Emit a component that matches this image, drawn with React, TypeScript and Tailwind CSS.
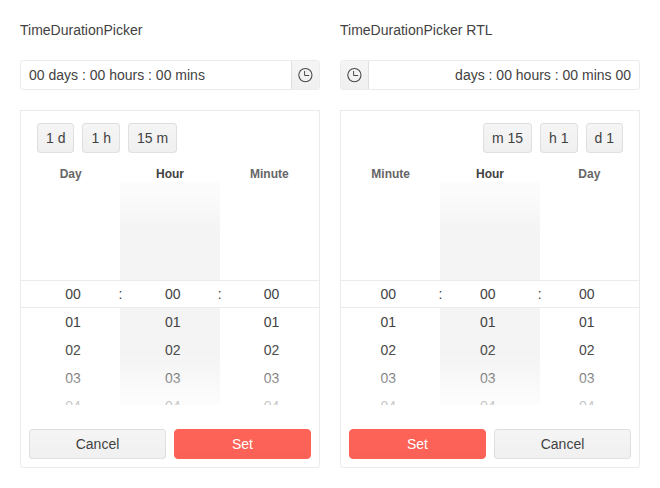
const buttonFace =
  'border border-black/8 bg-[#f5f5f5] bg-linear-to-b from-transparent to-black/[0.02] text-[#424242]';

const columns = [
  { label: 'Day', active: false },
  { label: 'Hour', active: true },
  { label: 'Minute', active: false },
];

const values = ['00', '01', '02', '03', '04'];

function ClockIcon() {
  return (
    <svg width="16" height="16" viewBox="0 0 16 16" fill="none" stroke="#4a4a4a">
      <circle cx="8.4" cy="8.1" r="6.6" strokeWidth="1.1" />
      <path d="M7.6 4v4.5h4.6" strokeWidth="1" />
    </svg>
  );
}

function DateInput({ rtl }: { rtl: boolean }) {
  return (
    <div className="mt-5 flex h-[30px] overflow-hidden rounded border border-black/8 bg-white">
      <span className="flex-1 px-2 py-1">00 days : 00 hours : 00 mins</span>
      <button
        className={`flex w-7 shrink-0 items-center justify-center border-s border-black/8 bg-[#f5f5f5] bg-linear-to-b from-transparent to-black/[0.02] pr-px`}
      >
        <ClockIcon />
      </button>
    </div>
  );
}

function TimeColumn({ label, active, rtl }: { label: string; active: boolean; rtl: boolean }) {
  return (
    <div className="flex min-w-0 flex-1 flex-col">
      <div
        className={`h-[29px] pt-3 text-center text-xs leading-[18px] font-bold ${active ? 'text-[#424242]' : 'text-[#666666]'}`}
      >
        {label}
      </div>
      <div
        className={`relative h-[223px] overflow-hidden pt-[98px] ${active ? 'bg-[#f4f4f4]' : ''}`}
      >
        <div className="absolute inset-x-0 top-[98px] h-7 bg-white" />
        <ul
          className={`relative text-center leading-7 ${rtl ? (active ? 'pr-[4.4px]' : 'pr-[5px]') : active ? 'pl-[5.6px]' : 'pl-[4.6px]'}`}
        >
          {values.map((v) => (
            <li key={v} className="h-7">
              {v}
            </li>
          ))}
        </ul>
        <div className="absolute top-0 -left-1/2 h-0 w-[200%] shadow-[0_0_42px_21px_#fff]" />
        <div className="absolute bottom-0 -left-1/2 h-0 w-[200%] shadow-[0_0_42px_21px_#fff]" />
      </div>
    </div>
  );
}

function Picker({ title, rtl = false }: { title: string; rtl?: boolean }) {
  return (
    <section className="w-[300px]">
      <h2 className="leading-5">{title}</h2>
      <div dir={rtl ? 'rtl' : 'ltr'}>
        <DateInput rtl={rtl} />
        <div className="mt-5 h-[358px] rounded-b border border-black/8 bg-white">
          <div className="flex gap-2 px-4 pt-3">
            {['1 d', '1 h', '15 m'].map((t) => (
              <button key={t} className={`h-[30px] rounded px-2 leading-5 ${buttonFace}`}>
                {t}
              </button>
            ))}
          </div>
          <div className="relative flex">
            {columns.map((c) => (
              <TimeColumn key={c.label} label={c.label} active={c.active} rtl={rtl} />
            ))}
            <div className="absolute inset-x-0 top-[127px] h-7 border-y border-black/8 leading-[26px]">
              <span className="absolute left-1/3 -translate-x-1/2">:</span>
              <span className="absolute left-2/3 -translate-x-1/2">:</span>
            </div>
          </div>
          <div className="mt-4 flex gap-2 p-2">
            <button className={`h-[30px] flex-1 rounded leading-5 ${buttonFace}`}>Cancel</button>
            <button className="h-[30px] flex-1 rounded border border-[#ff6358] bg-[#ff6358] bg-linear-to-b from-transparent to-black/[0.02] leading-5 text-white">
              Set
            </button>
          </div>
        </div>
      </div>
    </section>
  );
}

export default function App() {
  return (
    <main className="flex h-[488px] w-[660px] gap-5 bg-white p-5 font-['Liberation_Sans',Arial,sans-serif] text-sm text-[#424242]">
      <Picker title="TimeDurationPicker" />
      <Picker title="TimeDurationPicker RTL" rtl />
    </main>
  );
}
